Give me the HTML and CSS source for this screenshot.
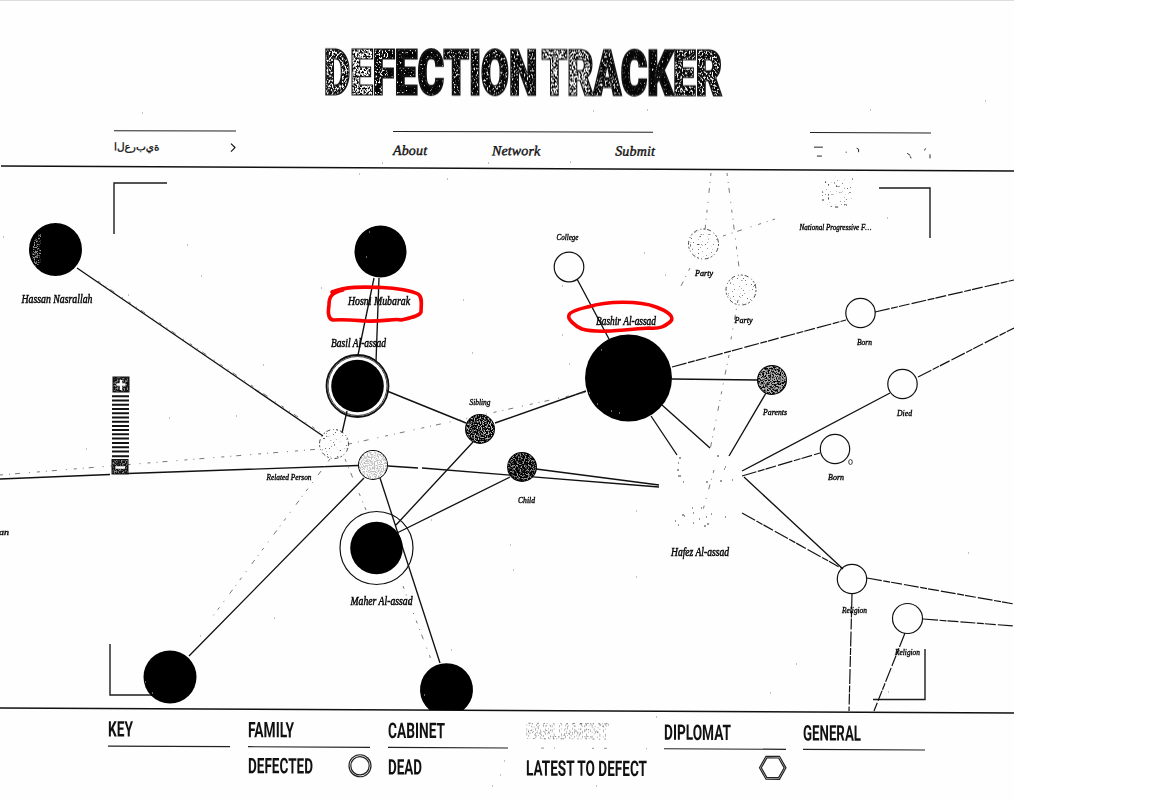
FILE: index.html
```html
<!DOCTYPE html>
<html lang="en">
<head>
<meta charset="utf-8">
<title>Defection Tracker</title>
<link rel="stylesheet" href="styles.css">
</head>
<body>
<div class="page">
  <header class="header">
    <svg class="title" viewBox="0 0 420 66" role="img">
      <defs>
        <filter id="worn" filterUnits="userSpaceOnUse" primitiveUnits="userSpaceOnUse" x="0" y="0" width="420" height="66" color-interpolation-filters="sRGB">
          <feTurbulence type="fractalNoise" baseFrequency=".6 .5" numOctaves="3" seed="7" result="n"/>
          <feColorMatrix in="n" x="0" y="0" width="34" height="66" values="0 0 0 0 1  0 0 0 0 1  0 0 0 0 1  7 0 0 0 -3.3" result="a"/>
          <feColorMatrix in="n" x="34" y="0" width="24" height="66" values="0 0 0 0 1  0 0 0 0 1  0 0 0 0 1  7 0 0 0 -2.9" result="b"/>
          <feColorMatrix in="n" x="58" y="0" width="16" height="66" values="0 0 0 0 1  0 0 0 0 1  0 0 0 0 1  7 0 0 0 -3.7" result="c"/>
          <feColorMatrix in="n" x="74" y="0" width="54" height="66" values="0 0 0 0 1  0 0 0 0 1  0 0 0 0 1  7 0 0 0 -4.4" result="d"/>
          <feColorMatrix in="n" x="128" y="0" width="97" height="66" values="0 0 0 0 1  0 0 0 0 1  0 0 0 0 1  7 0 0 0 -3.9" result="e"/>
          <feColorMatrix in="n" x="225" y="0" width="50" height="66" values="0 0 0 0 1  0 0 0 0 1  0 0 0 0 1  7 0 0 0 -3" result="f"/>
          <feColorMatrix in="n" x="275" y="0" width="30" height="66" values="0 0 0 0 1  0 0 0 0 1  0 0 0 0 1  7 0 0 0 -3.7" result="g"/>
          <feColorMatrix in="n" x="305" y="0" width="55" height="66" values="0 0 0 0 1  0 0 0 0 1  0 0 0 0 1  7 0 0 0 -4.5" result="h"/>
          <feColorMatrix in="n" x="360" y="0" width="60" height="66" values="0 0 0 0 1  0 0 0 0 1  0 0 0 0 1  7 0 0 0 -3.5" result="i"/>
          <feMerge result="holes"><feMergeNode in="a"/><feMergeNode in="b"/><feMergeNode in="c"/><feMergeNode in="d"/><feMergeNode in="e"/><feMergeNode in="f"/><feMergeNode in="g"/><feMergeNode in="h"/><feMergeNode in="i"/></feMerge>
          <feMorphology in="SourceAlpha" operator="erode" radius="1" result="core"/>
          <feComposite in="holes" in2="core" operator="in" result="wear"/>
          <feMerge><feMergeNode in="SourceGraphic"/><feMergeNode in="wear"/></feMerge>
        </filter>
      </defs>
      <g filter="url(#worn)">
        <text class="t" x="10" y="56" textLength="398">DEFECTION TRACKER</text>
      </g>
    </svg>
    <div class="bar">
      <div class="lang"><span class="ar">&#x200E;ا&zwnj;ل&zwnj;ع&zwnj;ر&zwnj;ب&zwnj;ي&zwnj;ة</span><svg class="chev" viewBox="0 0 6 10"><path d="M1 1L5 5L1 9"/></svg></div>
      <nav class="nav"><a>About</a><a>Network</a><a>Submit</a></nav>
      <div class="social"><svg viewBox="0 0 122 30"><path d="M4 14h9M7 23h5M47 15l2 1 0 3M98 20l3 2M101 23l1 2M115 17l2-2M121 21v4M36 19h1"/></svg></div>
    </div>
  </header>

  <svg class="network" viewBox="0 168 1014 542">
    <defs>
      <filter id="mid" x="0" y="0" width="1" height="1" color-interpolation-filters="sRGB"><feTurbulence type="fractalNoise" baseFrequency=".7" numOctaves="3" seed="3"/><feColorMatrix values="0 0 0 0 1  0 0 0 0 1  0 0 0 0 1  5 0 0 0 -2.3"/><feComposite in2="SourceGraphic" operator="in"/></filter>
      <filter id="light" x="0" y="0" width="1" height="1" color-interpolation-filters="sRGB"><feTurbulence type="fractalNoise" baseFrequency=".7" numOctaves="3" seed="5"/><feColorMatrix values="0 0 0 0 1  0 0 0 0 1  0 0 0 0 1  5 0 0 0 -1.9"/><feComposite in2="SourceGraphic" operator="in"/></filter>
      <filter id="speck" x="0" y="0" width="1" height="1" color-interpolation-filters="sRGB"><feTurbulence type="fractalNoise" baseFrequency=".5" numOctaves="2" seed="8"/><feColorMatrix values="0 0 0 0 .3  0 0 0 0 .3  0 0 0 0 .3  10 0 0 0 -6.6"/><feComposite in2="SourceGraphic" operator="in"/></filter>
    </defs>

    <path class="rule" d="M1 166L1014 171M0 708L1014 713"/>
    <path class="frame" d="M114 234V183H167M879 188H930V238M110 644V695H160M873 699.500H925V649"/>

    <g class="edge">
      <path d="M77 268L323 436M374 278L358 355M379 278L376 362M387 391L466 423M347 411L342 433M495 423L586 391M473 442L396 525M510 477L397 533M364 478L189 656M380 478L440 663M536 469L659 485M577 279L609 339M672 379L757 380M766 393L729 456M651 416L677 455M662 405L710 448M890 393L742 471M744 477L843 569"/>
      <path d="M0 479L110 474.500M128 473.500L358 465.500M388 466L418 468M422 468L659 487"/>
      <path class="dash" d="M672 367L846 320M875 312L1014 280M918 377L1014 328M742 476L820 453M742 513L841 568M867 578L1014 604M852 594L849 711M905 633L874 711M923 619L1014 626"/>
    </g>
    <path class="faint" d="M0 475L320 449M349 444L587 392M98 281L320 432M330 459L213 616M345 459L366 510M403 586L432 662M711 173L705 230M727 173L740 275M723 236L775 219M690 268L681 286M754 286L760 280M738 300L730 345M729 355L710 450M714 470L703 510"/>

    <g class="solid">
      <circle cx="55.500" cy="249.500" r="26.500"/><circle cx="380.500" cy="251.500" r="26"/>
      <circle cx="357.500" cy="386" r="26.300"/><circle cx="628.500" cy="378" r="43.500"/>
      <circle cx="376.500" cy="548" r="26.300"/><circle cx="170" cy="677" r="26.500"/>
      <path d="M429.500 710A26.500 26.500 0 1 1 463.500 710Z"/>
      <circle cx="480" cy="429" r="15"/><circle cx="522" cy="467" r="15"/><circle cx="772" cy="380" r="15"/><circle cx="373" cy="465" r="15"/>
    </g>
    <g class="grain" filter="url(#mid)"><path opacity=".6" d="M40 232Q26 249 36 267L41 262V235Z"/><circle opacity=".75" cx="480" cy="429" r="14"/><circle opacity=".6" cx="522" cy="467" r="14"/></g>
    <g class="grain" filter="url(#light)"><circle cx="373" cy="465" r="14"/><circle opacity=".7" cx="772" cy="380" r="14"/></g>
    <circle class="grain" opacity=".75" cx="373" cy="465" r="14"/>
    <path class="pin" d="M601 350h1M589 393h1M597 404h1M611 411h1M619 413h1M369 232h1M366 257h1M145 682h1M152 693h1M424 695h1"/>

    <g class="ring">
      <circle class="heavy" cx="357.500" cy="386" r="31"/><circle class="thin" cx="357.500" cy="386" r="29.500"/>
      <circle cx="376.500" cy="548" r="36.500"/>
      <circle cx="569" cy="267" r="14.800"/><circle cx="860.500" cy="313" r="14.700"/><circle cx="902.500" cy="384" r="14.700"/>
      <circle cx="835" cy="449" r="14.700"/><circle cx="852" cy="579" r="14.700"/><circle cx="907.500" cy="618.500" r="15"/>
      <ellipse class="thin" cx="850.500" cy="462" rx="1.800" ry="2.500"/>
    </g>
    <g class="broken"><circle cx="703.500" cy="244" r="15"/><circle cx="741" cy="290" r="15"/><circle cx="334" cy="444" r="14.500"/></g>
    <g filter="url(#speck)"><circle cx="703.500" cy="244" r="14"/><circle cx="741" cy="290" r="14"/><circle cx="334" cy="444" r="14"/><circle cx="837" cy="192" r="16"/></g>
    <path class="spots" d="M679 458h2M678 463h1M677 470h2M678 476h3M683 482h1M706 482h2M717 456h2M724 469h1M725 467h1M720 481h2M732 480h1M682 515h2M684 516h1M693 513h1M701 508h1M699 519h1M706 517h1M707 524h2M675 521h1M678 525h1M693 523h1M704 526h2M725 517h1M692 508h1M711 514h1M822 192h1M822 200h2M852 179h1M825 182h1M835 207h3M846 205h1"/>

    <g class="zoom">
      <rect x="112.500" y="376.500" width="17" height="16"/><rect x="111.500" y="459" width="17" height="15.500"/>
      <path d="M112 396.200h17M112 400.500h17M112 404.700h17M112 409h17M112 413.300h17M112 417.500h17M112 421.700h17M112 425.900h17M112 430.100h17M112 434.300h17M112 438.500h17M112 443h17M112 447.300h17M112 451.600h17M112 456.200h17"/>
      <g class="grain" filter="url(#mid)"><rect x="113.500" y="377.500" width="15" height="14"/><rect x="112.500" y="460" width="15" height="13.500"/></g>
      <path class="sign" d="M116.500 384.500h9M121 380V390M115.500 467.500h9.500"/>
    </g>

    <g class="label">
      <text x="21.500" y="303" textLength="71">Hassan Nasrallah</text>
      <text x="348" y="305" textLength="62">Hosni Mubarak</text>
      <text x="331" y="347" textLength="55">Basil Al-assad</text>
      <text x="596" y="324.500" textLength="60">Bashir Al-assad</text>
      <text x="350.500" y="605" textLength="62">Maher Al-assad</text>
      <text x="671" y="555.500" textLength="58">Hafez Al-assad</text>
      <text x="-1" y="535" textLength="10" class="s">an</text>
    </g>
    <g class="label s">
      <text x="469.500" y="404.500" textLength="21">Sibling</text>
      <text x="266.500" y="479.500" textLength="45">Related Person</text>
      <text x="518" y="502.500" textLength="17">Child</text>
      <text x="556.500" y="240" textLength="22">College</text>
      <text x="695" y="275.500" textLength="18">Party</text>
      <text x="734.500" y="322.500" textLength="18">Party</text>
      <text x="799.500" y="229.500" textLength="72">National Progressive F…</text>
      <text x="857" y="345" textLength="15">Born</text>
      <text x="897" y="415.500" textLength="15">Died</text>
      <text x="828" y="479.500" textLength="16">Born</text>
      <text x="763" y="415" textLength="24">Parents</text>
      <text x="842" y="612.500" textLength="25">Religion</text>
      <text x="895" y="655" textLength="25">Religion</text>
    </g>
    <path class="spots dim" d="M142 113h1M870 110h1M593 111h1M647 110h1M985 101h1M382 163h1M359 174h1M447 179h1M488 163h1M570 162h1M187 245h1M201 276h1M3 237h1M321 288h1M463 300h1M472 353h1M263 365h1M169 418h1M236 416h1M86 449h1M128 295h1M644 253h1M665 275h1M562 286h1M562 335h1M569 364h1M510 545h1M513 570h1M636 577h1M636 511h1M274 618h1M200 636h1M796 664h1M770 693h1M888 692h1M968 553h1M725 517h1M656 717h1M492 786h1M596 786h1M504 761h1M500 775h1M451 650h1M887 218h1M431 520h1"/>
    <g class="marker">
      <path d="M332 292C348 286 365 287 382 287.500C397 288 412 291 418 294C423 297 421 306 421 312C420 316 409 318 401 320C396 318 382 322 365 321C352 320 343 319 333 320C328 319 328 311 329 305C329 297 331 293 343 290"/>
      <path d="M588 307C608 300.500 640 301 656 307C667 311 676 317 670 322C665 326 661 329 649 328C630 329 599 334 582 329C575 326 567 319 569 315C570 311 582 308 594 305.500"/>
    </g>
  </svg>

  <footer class="key">
    <svg class="cell" viewBox="0 0 122 40"><text x="0" y="26" textLength="25">KEY</text><path d="M0 35.500h122"/></svg>
    <svg class="cell" viewBox="0 0 122 40"><text x="0" y="26" textLength="46">FAMILY</text><path d="M0 35.500h122"/></svg>
    <svg class="cell" viewBox="0 0 122 40"><text x="0" y="26" textLength="57">CABINET</text><path d="M0 35.500h120"/></svg>
    <svg class="cell faded" viewBox="0 0 122 40"><text x="0" y="26" textLength="83">PARLIAMENT</text><path d="M15 35.500h3M28 35.500h1M66 35.500h2M78 35.500h3M120 35.500h1"/></svg>
    <svg class="cell" viewBox="0 0 122 40"><text x="0" y="26.500" textLength="67">DIPLOMAT</text><path d="M0 35.500h122"/></svg>
    <svg class="cell" viewBox="0 0 122 40"><text x="0" y="26.500" textLength="58">GENERAL</text><path d="M0 35.500h122"/></svg>
    <svg class="cell second" viewBox="0 0 124 40"><text x="0" y="22" textLength="65">DEFECTED</text><circle cx="112" cy="14" r="11"/><circle cx="112" cy="14" r="9.200"/></svg>
    <svg class="cell" viewBox="0 0 122 40"><text x="0" y="22.500" textLength="34">DEAD</text></svg>
    <svg class="cell wide" viewBox="0 0 262 40"><text x="0" y="23" textLength="121">LATEST TO DEFECT</text><path d="M233.500 14L240 2.500H253.500L260 14L253.500 25.500H240ZM235.300 14L240.900 4.200H252.600L258.200 14L252.600 23.800H240.900Z"/></svg>
  </footer>
</div>
<script src="labels.js"></script>
</body>
</html>
```
FILE: labels.js
```js
// Condense every fitted label by scaling its glyphs as well as its spacing.
document.querySelectorAll('text[textLength]').forEach(function (t) {
  t.setAttribute('lengthAdjust', 'spacingAndGlyphs');
});
```
FILE: styles.css
```css
* { box-sizing: border-box; }
body { margin: 0; background: #fff; overflow: hidden; font-family: "Liberation Serif", serif; color: #111; }
svg { display: block; }
.page { width: 1014px; height: 800px; background: #fefefe; border-top: 1px solid #ddd; margin-right: auto; overflow: hidden; }
.header { height: 167px; padding-top: 36px; display: flex; flex-direction: column; transform: skewY(.15deg); transform-origin: 0 0; }
.title { width: 420px; height: 66px; margin-left: 314px; overflow: visible; }
.t { font: 900 62px Roboto, "Liberation Sans", sans-serif; fill: #050505; stroke: #111; stroke-width: 2.8; word-spacing: -7px; }
.bar { display: flex; margin: 27px 83px 0 114px; align-items: flex-start; }
.lang, .nav, .social { border-top: 1.5px solid #222; display: flex; justify-content: space-between; }
.lang { width: 122px; height: 32px; padding-top: 7px; }
.ar { direction: ltr; unicode-bidi: bidi-override; font: 10.5px/16px "DejaVu Sans", sans-serif; white-space: nowrap; letter-spacing: -.3px; -webkit-text-stroke: .3px #111; }
.chev { width: 6px; height: 10px; margin-top: 4px; fill: none; stroke: #111; stroke-width: 1.2; }
.nav { width: 260px; height: 32px; padding-top: 9px; margin-left: 157px; font: italic 400 14px/19px "Liberation Serif", serif; letter-spacing: .15px; -webkit-text-stroke: .4px #111; }
.nav a:nth-child(2) { margin-right: 10px; }
.nav a:last-child { margin-right: -2px; }
.social { width: 121px; margin-left: auto; }
.social svg { width: 121px; height: 30px; fill: none; stroke: #222; stroke-width: 1; }

.network { width: 1014px; height: 542px; overflow: visible; position: relative; }
.rule { stroke: #111; stroke-width: 1.5; fill: none; }
.frame { stroke: #1c1c1c; stroke-width: 1.4; fill: none; }
.edge { stroke: #111; stroke-width: 1.35; fill: none; }
.dash { stroke-dasharray: 15 1.5 7 1 11 2; stroke-width: 1.2; }
.faint { stroke: #555; stroke-width: .8; fill: none; stroke-dasharray: 3 6 1 5 5 9 1 7; }
.solid { fill: #000; }
.grain { fill: #fff; }
.pin { stroke: #ccc; stroke-width: 1; }
.ring { fill: none; stroke: #111; stroke-width: 1.2; }
.thin { stroke-width: .8; }
.heavy { stroke-width: 1.8; }
.broken { fill: none; stroke: #333; stroke-width: .9; stroke-dasharray: 2 2 4 3 1 2; }
.spots { stroke: #333; stroke-width: 1; }
.dim { stroke: #888; }
.zoom rect { fill: #111; }
.zoom path { stroke: #111; stroke-width: 2; fill: none; }
.zoom .sign { stroke: #fff; stroke-width: 2.4; }
.zoom .grain rect { fill: #fff; fill-opacity: .5; }
.label { font: italic 400 12px "Liberation Serif", serif; fill: #080808; stroke: #080808; stroke-width: .5; }
.label.s, .label .s { font-size: 9px; stroke-width: .4; }
.marker { fill: none; stroke: #fb0000; stroke-width: 3.6; stroke-linecap: round; stroke-linejoin: round; }

.key { display: grid; grid-template-columns: 140px 140px 138px 138px 139px 122px; grid-template-rows: 40px 40px; padding-left: 108px; transform: skewY(.28deg); transform-origin: 0 0; }
.cell { width: 122px; height: 40px; overflow: visible; fill: none; stroke: #222; stroke-width: 1.2; }
.cell text { font: 700 21.5px Roboto, "Liberation Sans", sans-serif; fill: #111; stroke: none; }
.faded { stroke: #aaa; }
.cell.faded text { fill: none; stroke: #777; stroke-width: .8; stroke-dasharray: 2 3 1 4 3 2; }
.second { grid-column: 2; width: 124px; }
.wide { grid-column: span 2; width: 262px; }
```
